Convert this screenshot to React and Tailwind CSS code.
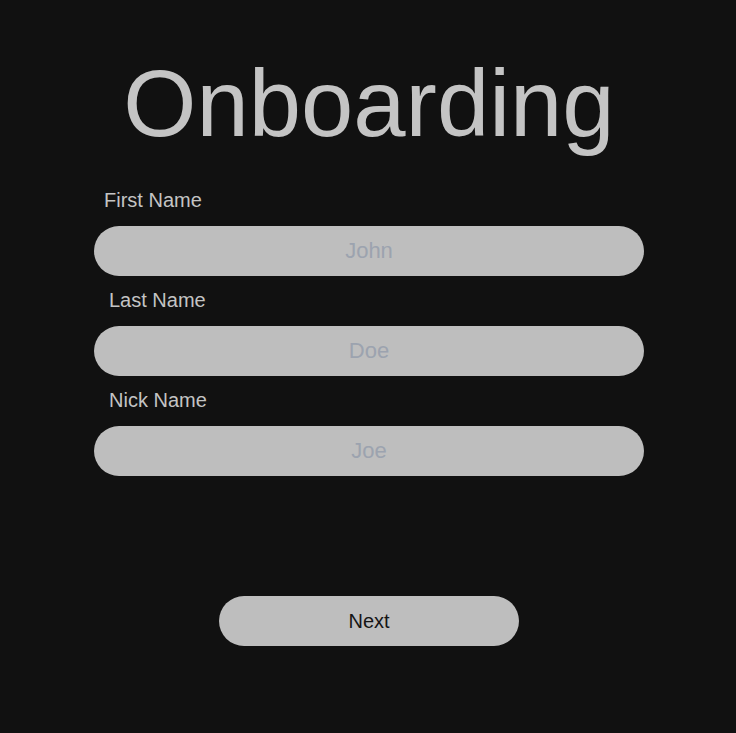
import React, { useState } from 'react';

const Field = ({ label, placeholder, labelClass }) => {
  const [value, setValue] = useState('');
  return (
    <div className="flex flex-col">
      <label className={`text-[20px] leading-6 text-[#c4c4c4] ${labelClass}`}>{label}</label>
      <input
        type="text"
        value={value}
        placeholder={placeholder}
        onChange={(e) => setValue(e.target.value)}
        className="mt-[14px] h-[50px] w-[550px] rounded-full bg-[#bebebe] text-center text-[22px] text-[#333] placeholder:text-[#9ca3af] outline-none"
      />
    </div>
  );
};

const App = () => {
  return (
    <div
      className="min-h-[733px] w-full bg-[#111111] pl-[2px] flex flex-col items-center"
      style={{ fontFamily: '"Liberation Sans", Arial, sans-serif' }}
    >
      <h1 className="mt-[57px] text-[94px] leading-none text-[#c4c4c4]">Onboarding</h1>

      <form className="mt-[37px] flex flex-col gap-[12px]" onSubmit={(e) => e.preventDefault()}>
        <Field label="First Name" placeholder="John" labelClass="ml-[10px]" />
        <Field label="Last Name" placeholder="Doe" labelClass="ml-[15px]" />
        <Field label="Nick Name" placeholder="Joe" labelClass="ml-[15px]" />
      </form>

      <button className="mt-[120px] h-[50px] w-[300px] rounded-full bg-[#bebebe] text-[20px] text-[#151515]">
        Next
      </button>
    </div>
  );
};

export default App;
